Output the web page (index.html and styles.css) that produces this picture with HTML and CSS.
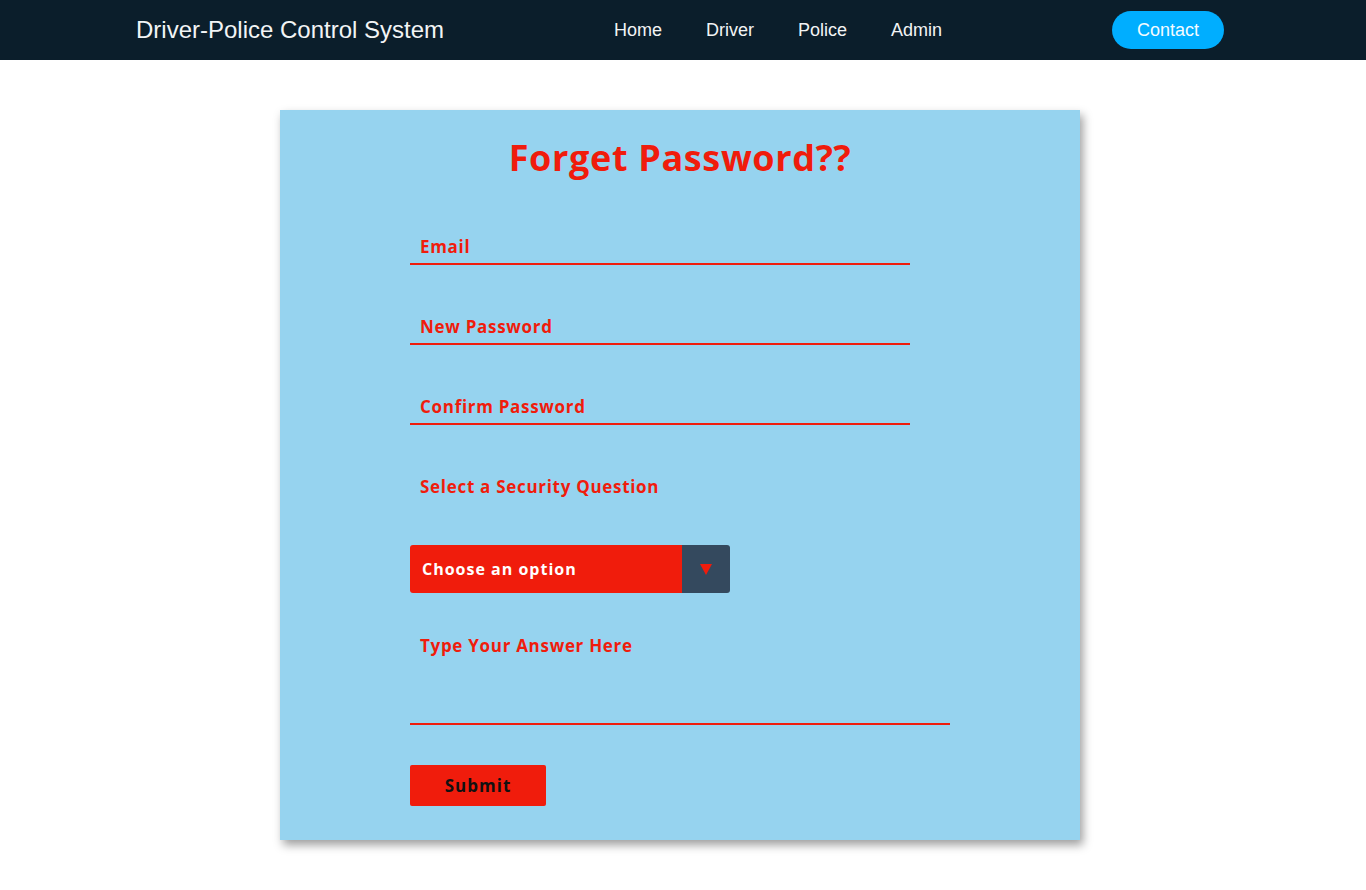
FILE: index.html
```html
<!DOCTYPE html>
<html lang="en">
<head>
<meta charset="utf-8">
<title>Forget Password</title>
<link rel="stylesheet" href="styles.css">
</head>
<body>
<header class="navbar">
  <div class="brand">Driver-Police Control System</div>
  <nav class="links">
    <a href="#">Home</a>
    <a href="#">Driver</a>
    <a href="#">Police</a>
    <a href="#">Admin</a>
  </nav>
  <a class="contact" href="#">Contact</a>
</header>

<main class="page">
  <section class="card">
    <h1 class="heading">Forget Password??</h1>
    <form class="form">
      <input class="field" type="email" placeholder="Email">
      <input class="field" type="password" placeholder="New Password">
      <input class="field" type="password" placeholder="Confirm Password">
      <div class="question-label">Select a Security Question</div>
      <div class="select">
        <select class="select-input">
          <option>Choose an option</option>
          <option>What is your pet's name?</option>
          <option>What city were you born in?</option>
        </select>
        <span class="select-arrow">
          <svg width="12" height="11" viewBox="0 0 12 11"><polygon points="0,0 12,0 6,11" fill="#f01c0c"/></svg>
        </span>
      </div>
      <textarea class="answer" placeholder="Type Your Answer Here"></textarea>
      <button class="submit" type="button">Submit</button>
    </form>
  </section>
</main>
</body>
</html>
```

FILE: styles.css
```css
* { box-sizing: border-box; }

html, body {
  margin: 0;
  padding: 0;
  background: #ffffff;
}

body {
  font-family: "Liberation Sans", Arial, sans-serif;
}

.navbar {
  height: 60px;
  background: #0b1e2b;
  display: flex;
  align-items: center;
  justify-content: space-between;
  padding: 0 142px 0 136px;
}

.brand {
  color: #f2f4f5;
  font-size: 24px;
}

.links {
  display: flex;
  gap: 44px;
}

.links a {
  color: #f2f4f5;
  font-size: 18px;
  text-decoration: none;
}

.contact {
  display: block;
  height: 38px;
  line-height: 38px;
  padding: 0 25px;
  border-radius: 19px;
  background: #00aeff;
  color: #f4fbff;
  font-size: 18px;
  text-decoration: none;
}

.page {
  display: flex;
  justify-content: center;
  padding: 50px 6px 50px 0;
}

.card {
  width: 800px;
  height: 730px;
  background: #96d3ef;
  box-shadow: 3px 5px 9px rgba(0, 0, 0, 0.38);
  padding: 20px 0 0 130px;
  font-family: "Open Sans", "Noto Sans", sans-serif;
}

.heading {
  margin: 0 0 39px -130px;
  height: 56px;
  line-height: 56px;
  text-align: center;
  font-size: 36px;
  font-weight: 700;
  letter-spacing: 0.65px;
  color: #f01c0c;
}

.form {
  display: flex;
  flex-direction: column;
  align-items: flex-start;
  gap: 40px;
}

.field {
  width: 500px;
  height: 40px;
  border: none;
  border-bottom: 2px solid #f01c0c;
  background: transparent;
  padding: 4px 10px 0;
  font-family: inherit;
  font-size: 17px;
  font-weight: 700;
  letter-spacing: 0.7px;
  color: #f01c0c;
  outline: none;
}

.field::placeholder,
.answer::placeholder {
  color: #f01c0c;
  opacity: 1;
}

.question-label {
  height: 40px;
  line-height: 40px;
  padding: 2px 10px 0;
  font-size: 17px;
  font-weight: 700;
  letter-spacing: 0.7px;
  color: #f01c0c;
}

.select {
  display: flex;
  width: 320px;
  height: 48px;
  border-radius: 3px;
  overflow: hidden;
}

.select-input {
  flex: 1 1 0;
  min-width: 0;
  appearance: none;
  -webkit-appearance: none;
  border: none;
  outline: none;
  background: #f01c0c;
  color: #ffffff;
  font-family: inherit;
  font-size: 16px;
  font-weight: 700;
  letter-spacing: 1px;
  padding: 0 12px;
}

.select-arrow {
  flex: 0 0 48px;
  width: 48px;
  background: #34495e;
  display: flex;
  align-items: center;
  justify-content: center;
}

.answer {
  width: 540px;
  height: 92px;
  border: none;
  border-bottom: 2px solid #f01c0c;
  background: transparent;
  padding: 1px 10px 0;
  line-height: 24px;
  resize: none;
  font-family: inherit;
  font-size: 17px;
  font-weight: 700;
  letter-spacing: 0.7px;
  color: #f01c0c;
  outline: none;
}

.submit {
  width: 136px;
  height: 41px;
  border: none;
  border-radius: 2px;
  background: #f01c0c;
  color: #111111;
  font-family: inherit;
  font-size: 17px;
  font-weight: 700;
  letter-spacing: 1px;
  cursor: pointer;
}
```
